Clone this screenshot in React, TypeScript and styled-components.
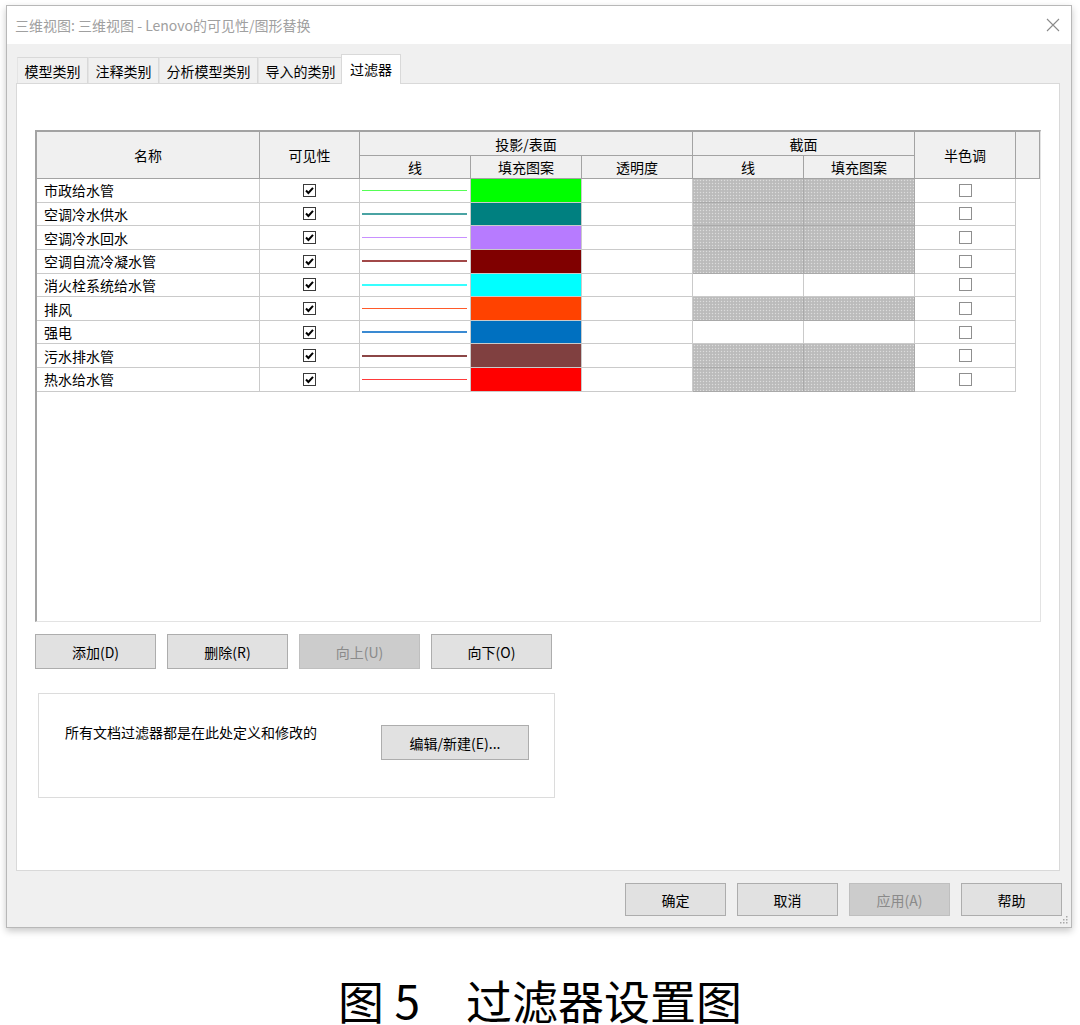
import React from "react";
import styled, { createGlobalStyle, css } from "styled-components";

const Global = createGlobalStyle`
  html, body { margin: 0; padding: 0; background: #ffffff; }
  body { font-family: "Noto Sans CJK SC", "Microsoft YaHei", "Liberation Sans", sans-serif; }
  * { box-sizing: border-box; }
`;

const COLS = "223px 100px 111px 111px 111px 111px 111px 101px 1fr";

const Page = styled.div`
  width: 1080px;
  height: 1025px;
  overflow: hidden;
  padding-top: 5px;
`;

const Dialog = styled.div`
  position: relative;
  margin-left: 6px;
  width: 1066px;
  height: 923px;
  border: 1px solid #b8b8b8;
  box-shadow: 0 3px 7px rgba(0, 0, 0, 0.22);
  background: #f0f0f0;
  display: flex;
  flex-direction: column;
`;

const TitleBar = styled.div`
  height: 38px;
  background: #ffffff;
  display: flex;
  align-items: center;
  justify-content: space-between;
  padding: 0 11px 0 8px;
  font-size: 14px;
  color: #a0a0a0;
`;

const CloseIcon = styled.svg`
  width: 14px;
  height: 14px;
`;

const TabStrip = styled.div`
  display: flex;
  align-items: flex-start;
  height: 30px;
  margin-top: 10px;
  padding-left: 10px;
  position: relative;
  z-index: 2;
`;

const Tab = styled.div<{ $active?: boolean }>`
  font-size: 14px;
  line-height: 20px;
  color: #000;
  display: flex;
  align-items: center;
  ${(p) =>
    p.$active
      ? css`
          margin-left: -2px;
          height: 30px;
          padding: 0 8px 2px;
          background: #ffffff;
          border: 1px solid #d9d9d9;
          border-bottom: none;
        `
      : css`
          margin-top: 3px;
          height: 26px;
          padding: 0 6.5px;
          background: #f0f0f0;
          border: 1px solid #d9d9d9;
          border-left-color: #e4e4e4;
          border-bottom: none;
        `}
`;

const Panel = styled.div`
  margin-left: 9px;
  margin-top: -1px;
  width: 1044px;
  height: 788px;
  background: #ffffff;
  border: 1px solid #d9d9d9;
  padding: 46px 18px 0 18px;
  position: relative;
  z-index: 1;
`;

const ListView = styled.div`
  width: 1006px;
  height: 492px;
  border-top: 2px solid #a3a3a3;
  border-left: 2px solid #a3a3a3;
  border-right: 1px solid #e3e3e3;
  border-bottom: 1px solid #e3e3e3;
  background: #ffffff;
  font-size: 14px;
  color: #000;
`;

const HeaderGrid = styled.div`
  display: grid;
  grid-template-columns: ${COLS};
  grid-template-rows: 24px 23px;
`;

const HeadCell = styled.div<{ $col: string; $row: string }>`
  grid-column: ${(p) => p.$col};
  grid-row: ${(p) => p.$row};
  background: #f0f0f0;
  border-right: 1px solid #a3a3a3;
  border-bottom: 1px solid #a3a3a3;
  display: flex;
  align-items: center;
  justify-content: center;
  line-height: 18px;
`;

const DataRow = styled.div`
  display: grid;
  grid-template-columns: ${COLS};
  height: 23.65px;
`;

const BaseCell = styled.div`
  border-right: 1px solid #cacaca;
  border-bottom: 1px solid #cacaca;
  display: flex;
  align-items: center;
  line-height: 18px;
`;

const NameCell = styled(BaseCell)`
  padding-left: 7px;
`;

const CenterCell = styled(BaseCell)`
  justify-content: center;
`;

const LineCell = styled(BaseCell)`
  padding: 0 3px 0 2px;
`;

const LineStroke = styled.div<{ $color: string }>`
  width: 100%;
  height: 1.6px;
  background: ${(p) => p.$color};
`;

const FillCell = styled(BaseCell)<{ $color: string }>`
  background: ${(p) => p.$color};
`;

const HatchCell = styled(BaseCell)<{ $hatched: boolean }>`
  ${(p) =>
    p.$hatched &&
    css`
      background-color: #bfbfbf;
      background-image: radial-gradient(circle, #dcdcdc 0.6px, transparent 1px),
        radial-gradient(circle, #b0b0b0 0.6px, transparent 1px);
      background-size: 3px 3px, 3px 3px;
      background-position: 0 0, 1.5px 1.5px;
      border-color: #a9a9a9;
    `}
`;

const Filler = styled.div``;

const Box = styled.span<{ $checked?: boolean }>`
  width: 13px;
  height: 13px;
  background: #ffffff;
  border: 1px solid ${(p) => (p.$checked ? "#3a3a3a" : "#8f8f8f")};
  display: inline-flex;
  align-items: center;
  justify-content: center;
`;

const ButtonRow = styled.div`
  display: flex;
  gap: 11px;
  margin-top: 12px;
`;

const Button = styled.button<{ $w: number; $h?: number; $disabled?: boolean }>`
  width: ${(p) => p.$w}px;
  height: ${(p) => p.$h ?? 35}px;
  font-family: inherit;
  font-size: 14px;
  line-height: 18px;
  padding: 0;
  background: ${(p) => (p.$disabled ? "#cccccc" : "#e1e1e1")};
  border: 1px solid ${(p) => (p.$disabled ? "#bfbfbf" : "#adadad")};
  color: ${(p) => (p.$disabled ? "#8a8a8a" : "#000000")};
`;

const GroupBox = styled.div`
  margin: 24px 0 0 3px;
  width: 517px;
  height: 105px;
  border: 1px solid #dcdcdc;
  background: #ffffff;
  display: flex;
  align-items: flex-start;
  justify-content: space-between;
  padding: 0 25px 0 26px;
`;

const GroupText = styled.div`
  margin-top: 28px;
  font-size: 14px;
  line-height: 20px;
  color: #000;
`;

const GroupButton = styled(Button)`
  margin-top: 31px;
`;

const Footer = styled.div`
  display: flex;
  justify-content: flex-end;
  gap: 11px;
  margin-top: 12px;
  padding-right: 9px;
`;

const Grip = styled.svg`
  position: absolute;
  right: 3px;
  bottom: 3px;
  width: 8px;
  height: 8px;
`;

const Caption = styled.div`
  margin-top: 46px;
  text-align: center;
  font-size: 46px;
  line-height: 50px;
  color: #000;
  font-family: "Noto Sans CJK SC", "Microsoft YaHei", sans-serif;
`;

type Row = { name: string; line: string; fill: string; hatched: boolean };

const rows: Row[] = [
  { name: "市政给水管", line: "#55ff55", fill: "#00ff00", hatched: true },
  { name: "空调冷水供水", line: "#4aa3a3", fill: "#008080", hatched: true },
  { name: "空调冷水回水", line: "#c890ff", fill: "#b77bff", hatched: true },
  { name: "空调自流冷凝水管", line: "#a24848", fill: "#800000", hatched: true },
  { name: "消火栓系统给水管", line: "#38ffff", fill: "#00ffff", hatched: false },
  { name: "排风", line: "#ff5a2a", fill: "#ff4200", hatched: true },
  { name: "强电", line: "#3a8ad2", fill: "#0070c0", hatched: false },
  { name: "污水排水管", line: "#8c4646", fill: "#804040", hatched: true },
  { name: "热水给水管", line: "#ff3a3a", fill: "#ff0000", hatched: true },
];

const Check = () => (
  <svg width="11" height="11" viewBox="0 0 11 11">
    <path d="M2 5.5 L4.4 8 L9 2.8" fill="none" stroke="#000" strokeWidth="2" />
  </svg>
);

export default function App() {
  return (
    <Page>
      <Global />
      <Dialog>
        <TitleBar>
          <span>三维视图: 三维视图 - Lenovo的可见性/图形替换</span>
          <CloseIcon viewBox="0 0 14 14">
            <path d="M1 1 L13 13 M13 1 L1 13" stroke="#8a8a8a" strokeWidth="1.1" />
          </CloseIcon>
        </TitleBar>
        <TabStrip>
          <Tab>模型类别</Tab>
          <Tab>注释类别</Tab>
          <Tab>分析模型类别</Tab>
          <Tab>导入的类别</Tab>
          <Tab $active>过滤器</Tab>
        </TabStrip>
        <Panel>
          <ListView>
            <HeaderGrid>
              <HeadCell $col="1" $row="1 / span 2">名称</HeadCell>
              <HeadCell $col="2" $row="1 / span 2">可见性</HeadCell>
              <HeadCell $col="3 / span 3" $row="1">投影/表面</HeadCell>
              <HeadCell $col="3" $row="2">线</HeadCell>
              <HeadCell $col="4" $row="2">填充图案</HeadCell>
              <HeadCell $col="5" $row="2">透明度</HeadCell>
              <HeadCell $col="6 / span 2" $row="1">截面</HeadCell>
              <HeadCell $col="6" $row="2">线</HeadCell>
              <HeadCell $col="7" $row="2">填充图案</HeadCell>
              <HeadCell $col="8" $row="1 / span 2">半色调</HeadCell>
              <HeadCell $col="9" $row="1 / span 2" />
            </HeaderGrid>
            {rows.map((r) => (
              <DataRow key={r.name}>
                <NameCell>{r.name}</NameCell>
                <CenterCell>
                  <Box $checked>
                    <Check />
                  </Box>
                </CenterCell>
                <LineCell>
                  <LineStroke $color={r.line} />
                </LineCell>
                <FillCell $color={r.fill} />
                <BaseCell />
                <HatchCell $hatched={r.hatched} />
                <HatchCell $hatched={r.hatched} />
                <CenterCell>
                  <Box />
                </CenterCell>
                <Filler />
              </DataRow>
            ))}
          </ListView>
          <ButtonRow>
            <Button $w={121}>添加(D)</Button>
            <Button $w={121}>删除(R)</Button>
            <Button $w={121} $disabled>
              向上(U)
            </Button>
            <Button $w={121}>向下(O)</Button>
          </ButtonRow>
          <GroupBox>
            <GroupText>所有文档过滤器都是在此处定义和修改的</GroupText>
            <GroupButton $w={148}>编辑/新建(E)...</GroupButton>
          </GroupBox>
        </Panel>
        <Footer>
          <Button $w={101} $h={33}>确定</Button>
          <Button $w={101} $h={33}>取消</Button>
          <Button $w={101} $h={33} $disabled>
            应用(A)
          </Button>
          <Button $w={101} $h={33}>帮助</Button>
        </Footer>
        <Grip viewBox="0 0 8 8">
          <g fill="#a8a8a8">
            <rect x="6" y="0" width="1.5" height="1.5" />
            <rect x="3" y="3" width="1.5" height="1.5" />
            <rect x="6" y="3" width="1.5" height="1.5" />
            <rect x="0" y="6" width="1.5" height="1.5" />
            <rect x="3" y="6" width="1.5" height="1.5" />
            <rect x="6" y="6" width="1.5" height="1.5" />
          </g>
        </Grip>
      </Dialog>
      <Caption>图 5　过滤器设置图</Caption>
    </Page>
  );
}
